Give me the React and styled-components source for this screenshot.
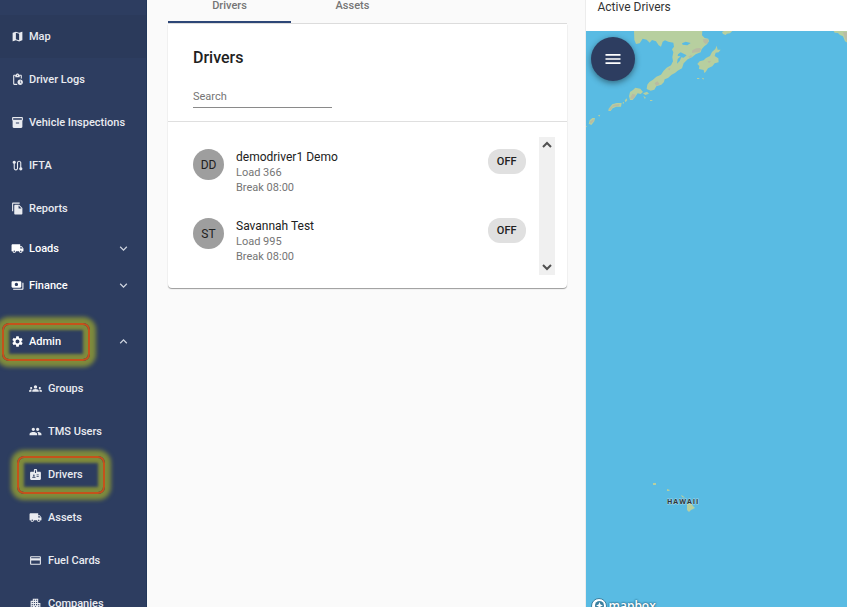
import React from "react";
import styled, { createGlobalStyle, css } from "styled-components";
import {
  MdMap, MdPendingActions, MdInventory2, MdRoute, MdFileCopy, MdLocalShipping,
  MdPayments, MdSettings, MdGroups, MdPeople, MdBadge, MdCreditCard,
  MdApartment, MdExpandMore, MdExpandLess, MdMenu,
} from "react-icons/md";

const GlobalStyle = createGlobalStyle`
  *, *::before, *::after { box-sizing: border-box; }
  body { margin: 0; background: #fafafa; font-family: Roboto, "Liberation Sans", sans-serif; font-size: 11px; }
  button, input { font: inherit; }
`;

const Page = styled.div`
  display: grid;
  grid-template-columns: 147px minmax(0, 5fr) minmax(0, 3fr);
  height: 100vh;
  overflow: hidden;
`;

const Sidebar = styled.nav`
  background: #2d3d60;
  border-right: 1px solid #22375a;
  padding-top: 15px;
  overflow: hidden;
  color: #e9ebf0;
`;

const mark = css`
  position: relative;
  &::after {
    content: "";
    position: absolute;
    top: 50%;
    left: ${(p) => (p.$nested ? 17 : 2)}px;
    width: 88px;
    height: 38px;
    margin-top: -19px;
    border: 2px solid #c5521b;
    border-radius: 7px;
    box-shadow: 0 0 4px 6px #7f8b3c, inset 0 0 3px 5px #7f8b3c;
    pointer-events: none;
  }
`;

const NavLink = styled.a`
  display: flex;
  align-items: center;
  gap: ${(p) => (p.$nested ? 6 : 5)}px;
  height: 43px;
  padding-left: ${(p) => (p.$nested ? 29 : 11)}px;
  background: ${(p) => (p.$active ? "#2b3a5b" : "transparent")};
  color: inherit;
  font-weight: 500;
  text-decoration: none;
  white-space: nowrap;
  ${(p) => p.$marked && mark}
  svg { width: 13px; height: 13px; flex: none; }
`;

const NavGroup = styled.button`
  display: flex;
  align-items: center;
  gap: 5px;
  width: 100%;
  height: 37px;
  margin: ${(p) => (p.$open ? "19px 0 7px" : "0")};
  padding: 0 15px 0 11px;
  border: 0;
  background: none;
  color: #fff;
  font-weight: 500;
  text-align: left;
  ${(p) => p.$marked && mark}
  svg { width: 13px; height: 13px; flex: none; }
  svg:last-child { width: 15px; height: 15px; margin-left: auto; color: #cfd4df; }
`;

const Main = styled.main`
  padding: 0 18px 0 21px;
  background: #fafafa;
`;

const Tabs = styled.div`
  display: flex;
  height: 24px;
  border-bottom: 1px solid #dcdcdc;
`;

const Tab = styled.button`
  width: 123px;
  padding: 0 0 9px;
  border: 0;
  border-bottom: 2px solid ${(p) => (p.$selected ? "#2d4677" : "transparent")};
  background: none;
  color: #757575;
  font-weight: 500;
  line-height: 12px;
`;

const Card = styled.section`
  background: #fff;
  border-radius: 0 0 4px 4px;
  box-shadow: 0 1px 1px #9a9a9a;
`;

const CardHead = styled.header`
  padding: 24px 25px 13px;
  border-bottom: 1px solid #dfdfdf;
`;

const Title = styled.h2`
  margin: 0 0 17px;
  color: #212121;
  font-size: 16px;
  font-weight: 500;
  line-height: 20px;
`;

const Search = styled.input`
  display: block;
  width: 139px;
  height: 23px;
  padding: 0;
  border: 0;
  border-bottom: 1px solid #8a8a8a;
  background: none;
  outline: none;
  &::placeholder { color: #757575; opacity: 1; }
`;

const ListWrap = styled.div`
  display: flex;
  padding: 15px 12px 13px 25px;
`;

const List = styled.ul`
  flex: 1;
  margin: 0;
  padding: 0;
  list-style: none;
`;

const Driver = styled.li`
  display: flex;
  align-items: flex-start;
  height: 69px;
  padding: 12px 13px 0 0;
`;

const Avatar = styled.span`
  display: grid;
  place-items: center;
  width: 31px;
  height: 31px;
  margin-right: 12px;
  border-radius: 50%;
  background: #9e9e9e;
  color: #212121;
  font-size: 12px;
`;

const Details = styled.div`
  flex: 1;
  color: #757575;
  line-height: 15px;
`;

const Name = styled.div`
  color: #212121;
  font-size: 12px;
  line-height: 16px;
`;

const Status = styled.span`
  padding: 1px 9px 0;
  border-radius: 12px;
  background: #e0e0e0;
  color: #212121;
  font-weight: 500;
  line-height: 24px;
`;

const Scroller = styled.div`
  display: flex;
  flex-direction: column;
  justify-content: space-between;
  width: 16px;
  padding: 4px 0;
  background: #f0f0f0;
`;

const ScrollButton = styled.button`
  display: grid;
  place-items: center;
  height: 8px;
  padding: 0;
  border: 0;
  background: none;
  color: #505050;
`;

const MapPanel = styled.section`
  display: flex;
  flex-direction: column;
  border-left: 1px solid #ececec;
  background: #fff;
`;

const MapTitle = styled.h3`
  height: 31px;
  margin: 0;
  padding-left: 12px;
  color: #333;
  font-size: 12px;
  font-weight: 400;
  line-height: 14px;
`;

const MapCanvas = styled.div`
  position: relative;
  flex: 1;
  overflow: hidden;
  background: #59bbe3;
`;

const MapDrawing = styled.svg`
  display: block;
  width: 100%;
  height: 100%;
`;

const MenuButton = styled.button`
  position: absolute;
  top: 6px;
  left: 5px;
  display: grid;
  place-items: center;
  width: 44px;
  height: 44px;
  padding: 0;
  border: 0;
  border-radius: 50%;
  background: #2d3d60;
  box-shadow: 0 2px 6px rgba(0, 0, 0, 0.45);
  color: #fff;
`;

const Logo = styled.a`
  position: absolute;
  left: 5px;
  bottom: -8px;
  display: flex;
  align-items: center;
  gap: 2px;
  color: #fff;
  font-family: "Open Sans", sans-serif;
  font-size: 12px;
  font-weight: 600;
  line-height: 18px;
  text-decoration: none;
  text-shadow: 0 0 2px #245f7d, 0 0 2px #245f7d;
`;

const topLinks = [
  { label: "Map", Icon: MdMap, active: true },
  { label: "Driver Logs", Icon: MdPendingActions },
  { label: "Vehicle Inspections", Icon: MdInventory2 },
  { label: "IFTA", Icon: MdRoute },
  { label: "Reports", Icon: MdFileCopy },
];

const groups = [
  { label: "Loads", Icon: MdLocalShipping },
  { label: "Finance", Icon: MdPayments },
  { label: "Admin", Icon: MdSettings, open: true, marked: true },
];

const adminLinks = [
  { label: "Groups", Icon: MdGroups },
  { label: "TMS Users", Icon: MdPeople },
  { label: "Drivers", Icon: MdBadge, marked: true },
  { label: "Assets", Icon: MdLocalShipping },
  { label: "Fuel Cards", Icon: MdCreditCard },
  { label: "Companies", Icon: MdApartment },
];

const drivers = [
  { initials: "DD", name: "demodriver1 Demo", load: "Load 366", rest: "Break 08:00" },
  { initials: "ST", name: "Savannah Test", load: "Load 995", rest: "Break 08:00" },
];

function Arrow({ up }) {
  return (
    <svg width="10" height="8" viewBox="0 0 10 8" fill="none" stroke="currentColor" strokeWidth="2">
      <path d={up ? "M1 6 5 2 9 6" : "M1 2 5 6 9 2"} />
    </svg>
  );
}

function Islands() {
  return (
    <MapDrawing aria-hidden="true">
      <g transform="scale(0.3333) translate(-33 -93)">
        <g fill="#b7cf9f">
          <path d="M177 93H382L381 106 389 114 400 116 402 124 396 133 388 139 380 148 377 157 362 163 351 172 338 178 326 190 321 205 308 212 300 219 290 224 279 234 269 238 267 246 259 254 244 259 238 269 227 272 215 267 217 254 223 246 234 239 244 230 258 224 266 212 275 203 288 196 294 184 292 172 295 157 291 148 297 140 295 128 280 125 270 121 263 125 258 140 251 136 243 124 231 120 224 128 215 119 203 116 194 130 183 132 178 119Z" />
          <path d="M367 192 374 184 386 181 393 174 405 168 411 156 421 147 425 137 428 149 437 149 431 157 422 158 419 168 430 175 431 187 419 190 412 199 399 205 392 216 388 219 386 210 372 207 373 198Z" />
          <path d="M441 96 447 93H472L465 100 456 101 452 105 444 102Z" />
          <path d="M776 93H820V130L810 124 804 109 795 105 789 99 779 98Z" />
          <path d="M162 289 165 276 174 270 181 263 196 266 204 276 197 282 188 280 181 290 173 300 165 300Z" />
          <path d="M204 280 216 275 222 281 211 285ZM205 288 212 292 210 298Z" />
          <path d="M101 326 112 313 125 309 140 309 138 320 124 320 113 325 107 333H100ZM149 302 154 295 157 300 152 307ZM142 309 147 305V311Z" />
          <path d="M44 361 52 354 60 354 58 364 49 375 41 371ZM69 346 76 344 73 350ZM33 378 37 379 33 382Z" />
          <path d="M366 234H373V237H366ZM380 233 387 235 385 239ZM225 300H232V303H225Z" />
        </g>
        <g fill="#59bbe3">
          <path d="M321 130 332 125 347 129 337 136 323 134ZM309 163 317 157 335 166 326 173 319 172 314 183 306 191 308 177 317 169 308 168Z" />
        </g>
        <g fill="#b9b5a5" opacity="0.75">
          <path d="M352 151 364 145 375 144 379 148 373 157 362 157 351 159ZM385 117 399 118 399 129 392 132 385 125ZM340 170 348 166 352 168 345 174Z" />
          <path d="M239 249 248 244 254 253 243 257ZM172 281 182 284 176 296 165 296ZM116 314 134 312 132 317 113 320 107 330 101 328ZM44 365 56 357 56 364 47 371ZM398 184 409 182 402 190ZM278 207 286 204 284 211Z" />
          <path d="M804 96H820V129L811 117Z" />
        </g>
      </g>
      <g fill="#b7cf9f">
        <path d="M67 452H70V454H67ZM81 458 84 459 83 460H81ZM95 464 97 465 99 467 96 466ZM101 473 105 472 107 475 109 477 105 479 103 481 101 479Z" />
      </g>
      <text x="81" y="473" fill="#2d363b" stroke="#d9e8e9" strokeWidth="1" strokeOpacity="0.6" paintOrder="stroke"
        fontFamily="Open Sans, sans-serif" fontSize="7" fontWeight="700" letterSpacing="1">HAWAII</text>
    </MapDrawing>
  );
}

export default function App() {
  return (
    <>
      <GlobalStyle />
      <Page>
        <Sidebar>
          {topLinks.map(({ label, Icon, active }) => (
            <NavLink key={label} href="#" $active={active}><Icon />{label}</NavLink>
          ))}
          {groups.map(({ label, Icon, open, marked }) => (
            <NavGroup key={label} type="button" aria-expanded={!!open} $open={open} $marked={marked}>
              <Icon />{label}{open ? <MdExpandLess /> : <MdExpandMore />}
            </NavGroup>
          ))}
          {adminLinks.map(({ label, Icon, marked }) => (
            <NavLink key={label} href="#" $nested $marked={marked}><Icon />{label}</NavLink>
          ))}
        </Sidebar>
        <Main>
          <Tabs role="tablist">
            <Tab type="button" role="tab" aria-selected="true" $selected>Drivers</Tab>
            <Tab type="button" role="tab" aria-selected="false">Assets</Tab>
          </Tabs>
          <Card>
            <CardHead>
              <Title>Drivers</Title>
              <Search type="text" placeholder="Search" aria-label="Search" />
            </CardHead>
            <ListWrap>
              <List>
                {drivers.map((d) => (
                  <Driver key={d.initials}>
                    <Avatar>{d.initials}</Avatar>
                    <Details>
                      <Name>{d.name}</Name>
                      <div>{d.load}</div>
                      <div>{d.rest}</div>
                    </Details>
                    <Status>OFF</Status>
                  </Driver>
                ))}
              </List>
              <Scroller>
                <ScrollButton type="button" aria-label="Scroll up"><Arrow up /></ScrollButton>
                <ScrollButton type="button" aria-label="Scroll down"><Arrow /></ScrollButton>
              </Scroller>
            </ListWrap>
          </Card>
        </Main>
        <MapPanel>
          <MapTitle>Active Drivers</MapTitle>
          <MapCanvas>
            <Islands />
            <MenuButton type="button" aria-label="Menu"><MdMenu size={20} /></MenuButton>
            <Logo href="#">
              <svg width="16" height="16" viewBox="0 0 16 16">
                <circle cx="8" cy="8" r="7.5" fill="#fff" stroke="#3b7f9f" />
                <circle cx="8.500" cy="7.500" r="4.500" fill="#3b7f9f" />
                <path d="M8.500 4 9.500 6.500 12 7.500 9.500 8.500 8.500 11 7.500 8.500 5 7.500 7.500 6.500Z" fill="#fff" />
              </svg>
              mapbox
            </Logo>
          </MapCanvas>
        </MapPanel>
      </Page>
    </>
  );
}
